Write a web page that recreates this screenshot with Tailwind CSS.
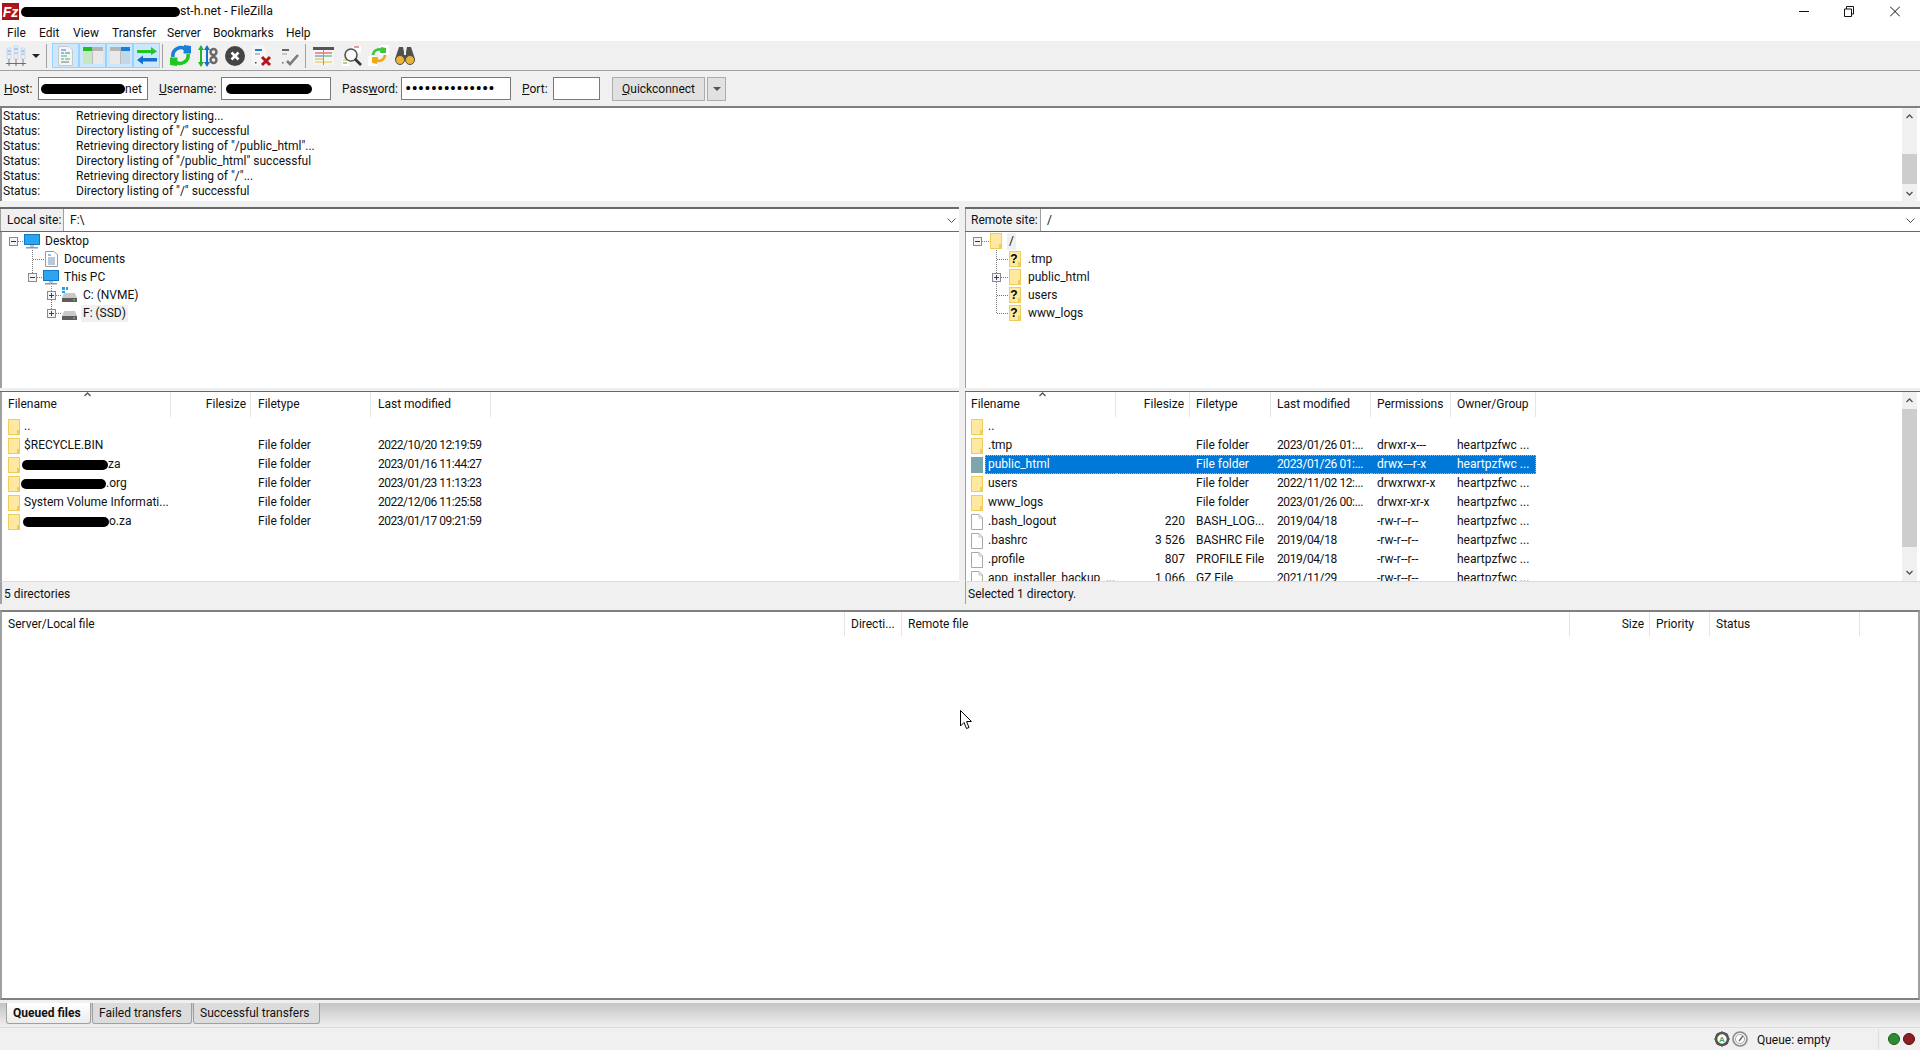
<!DOCTYPE html>
<html lang="en">
<head>
  <meta charset="UTF-8">
  <title>FileZilla</title>
  <script src="https://cdn.jsdelivr.net/npm/@tailwindcss/browser@4"></script>
</head>
<body class="h-[1050px] w-[1920px] overflow-hidden whitespace-nowrap bg-[#f0f0f0] text-[12px] text-[#111] [font-family:Roboto,sans-serif]">

  <!-- shared icons -->
  <svg class="hidden">
    <symbol id="folder" viewBox="0 0 12 16">
      <rect x="0.5" y="0.5" width="11" height="15" fill="#ffe9a0" stroke="#f0cd5a"/>
      <rect x="9" y="11" width="3" height="5" fill="#f0cd5a"/>
    </symbol>
    <symbol id="qfolder" viewBox="0 0 12 16">
      <rect x="0.5" y="0.5" width="11" height="15" fill="#ffe9a0" stroke="#f0cd5a"/>
      <rect x="9" y="11" width="3" height="5" fill="#f0cd5a"/>
      <text x="5" y="12" font-size="12" font-weight="700" text-anchor="middle" fill="#000" font-family="Liberation Sans">?</text>
    </symbol>
    <symbol id="file" viewBox="0 0 12 16">
      <path d="M.5.5H8L11.500 4V15.500H.5Z" fill="#fff" stroke="#a8a8a8"/>
      <path d="M8 .5V4H11.500" fill="none" stroke="#c4c4c4"/>
    </symbol>
    <symbol id="minus" viewBox="0 0 9 9">
      <rect x="0.5" y="0.5" width="8" height="8" fill="#f4f4f4" stroke="#8a8a8a"/>
      <path d="M2 4.500H7" stroke="#333"/>
    </symbol>
    <symbol id="plus" viewBox="0 0 9 9">
      <rect x="0.5" y="0.5" width="8" height="8" fill="#f4f4f4" stroke="#8a8a8a"/>
      <path d="M2 4.500H7M4.500 2V7" stroke="#2c3e78"/>
    </symbol>
    <symbol id="drive" viewBox="0 0 15 10">
      <path d="M2 1H13L15 6V10H0V6Z" fill="#c9c9c9"/>
      <rect y="6" width="15" height="4" fill="#5d5d5d"/>
      <rect x="11" y="7.500" width="2" height="1" fill="#7ddc6a"/>
    </symbol>
    <symbol id="monitor" viewBox="0 0 16 15">
      <rect x="0.500" y="0.500" width="15" height="10" fill="#2aa5f0" stroke="#1277c4"/>
      <rect x="6" y="11" width="4" height="2" fill="#b9c4cc"/>
      <rect x="2" y="13" width="12" height="1.500" fill="#8e9aa3"/>
    </symbol>
    <symbol id="updown" viewBox="0 0 7 5">
      <path d="M.5 4L3.500 1L6.500 4" fill="none" stroke="#555" stroke-width="1.400"/>
    </symbol>
  </svg>

  <!-- title bar -->
  <div class="flex h-[23px] items-center bg-white pl-[2px]">
    <svg class="h-[17px] w-[17px] shrink-0" viewBox="0 0 17 17">
      <rect width="17" height="17" fill="#b3161b"/>
      <rect x="1" y="1" width="15" height="15" fill="none" stroke="#7d0c10" stroke-width="0.500"/>
      <text x="8.500" y="14" font-size="14" font-weight="700" font-style="italic" text-anchor="middle" fill="#fff" font-family="Liberation Sans">Fz</text>
    </svg>
    <span class="ml-[2px] h-[10px] w-[159px] rounded-full bg-black"></span>
    <span class="text-[12.300px]">st-h.net - FileZilla</span>
    <div class="ml-auto flex items-center">
      <svg class="mr-[35px] h-[11px] w-[10px]" viewBox="0 0 10 11"><path d="M0 5.500H10" stroke="#111"/></svg>
      <svg class="mr-[36px] h-[11px] w-[10px]" viewBox="0 0 10 11"><path d="M.5 3H7.500V10.500H.5ZM2.500 3V.5H9.500V8H7.500" fill="none" stroke="#111"/></svg>
      <svg class="mr-[20px] h-[11px] w-[10px]" viewBox="0 0 10 11"><path d="M0 .5L10 10.500M10 .5L0 10.500" stroke="#111"/></svg>
    </div>
  </div>

  <!-- menu -->
  <div class="flex h-[18px] items-center bg-white pt-[2px] pl-[7px] leading-[16px]">
    <span class="w-[32px]">File</span>
    <span class="w-[34px]">Edit</span>
    <span class="w-[39px]">View</span>
    <span class="w-[55px]">Transfer</span>
    <span class="w-[46px]">Server</span>
    <span class="w-[73px]">Bookmarks</span>
    <span>Help</span>
  </div>

  <!-- toolbar -->
  <div class="flex h-[30px] items-center border-b border-[#a0a0a0] bg-[#f0f0f0]">
    <svg class="ml-[6px] h-[22px] w-[20px]" viewBox="0 0 20 22">
      <rect x="1" y="3" width="4" height="11" fill="#e8eef6" stroke="#b9c4d6" stroke-width="0.500"/>
      <rect x="8" y="1" width="4" height="13" fill="#e8eef6" stroke="#b9c4d6" stroke-width="0.500"/>
      <rect x="15" y="3" width="4" height="11" fill="#e8eef6" stroke="#b9c4d6" stroke-width="0.500"/>
      <path d="M1.500 6H4.500M8.500 4H11.500M15.500 6H18.500" stroke="#4da3e8"/>
      <path d="M1.500 9H4.500M8.500 8H11.500M15.500 9H18.500" stroke="#7bbcf0"/>
      <path d="M3 14V18M10 14V18M17 14V18" stroke="#7f7f7f"/>
      <path d="M0 18.500H20" stroke="#6d6d6d"/>
      <path d="M3 19V21M10 19V21M17 19V21" stroke="#6d6d6d"/>
    </svg>
    <svg class="ml-[6px] h-[4px] w-[8px]" viewBox="0 0 8 4"><path d="M0 0H8L4 4Z" fill="#222"/></svg>
    <div class="ml-[6px] h-[24px] w-px bg-[#a0a0a0]"></div>
    <div class="ml-[5px] flex h-[25px]">
      <div class="flex w-[27px] items-center justify-center border border-[#99d1ff] bg-[#cce8ff]">
        <svg class="h-[20px] w-[15px]" viewBox="0 0 15 20">
          <path d="M.5.5H11L14.500 4V19.500H.5Z" fill="#f5f5f5" stroke="#c8c8c8"/>
          <path d="M3 4H8M3 7H6M7 7H12" stroke="#3f7ec4"/>
          <path d="M3 10H9M3 13H6M7 13H12" stroke="#45b85c"/>
          <path d="M3 16H11" stroke="#777"/>
        </svg>
      </div>
      <div class="flex w-[27px] items-center justify-center border border-[#99d1ff] bg-[#cce8ff]">
        <svg class="h-[17px] w-[20px]" viewBox="0 0 20 17">
          <rect width="20" height="17" fill="#e9e9e9"/>
          <rect width="9" height="4" fill="#1fc21f"/>
          <rect x="9" width="11" height="4" fill="#b4b4b4"/>
          <rect y="4" width="9" height="13" fill="#c9e6c3"/>
          <path d="M9.500 4V17" stroke="#bdbdbd"/>
        </svg>
      </div>
      <div class="flex w-[27px] items-center justify-center border border-[#99d1ff] bg-[#cce8ff]">
        <svg class="h-[17px] w-[20px]" viewBox="0 0 20 17">
          <rect width="20" height="17" fill="#e9e9e9"/>
          <rect width="11" height="4" fill="#b4b4b4"/>
          <rect x="11" width="9" height="4" fill="#1a7fd6"/>
          <rect x="11" y="4" width="9" height="13" fill="#c2d6e6"/>
          <path d="M10.500 4V17" stroke="#bdbdbd"/>
        </svg>
      </div>
      <div class="flex w-[27px] items-center justify-center border border-[#99d1ff] bg-[#cce8ff]">
        <svg class="h-[20px] w-[20px]" viewBox="0 0 20 20">
          <path d="M0 4H14V1L20 5.500L14 9V7H0Z" fill="#1ec81e"/>
          <path d="M20 12H6V9.500L0 14L6 18.500V15.500H20Z" fill="#1670c8"/>
        </svg>
      </div>
    </div>
    <div class="ml-[2px] h-[24px] w-px bg-[#a0a0a0]"></div>
    <svg class="ml-[7px] h-[21px] w-[21px]" viewBox="0 0 21 21">
      <path d="M3 12A8 8 0 0 1 16 4.500" fill="none" stroke="#1a7fd6" stroke-width="3.600"/>
      <path d="M14 0L21 1V8.500H13.500Z" fill="#1a7fd6"/>
      <path d="M18 9A8 8 0 0 1 5 16.500" fill="none" stroke="#1ec81e" stroke-width="3.600"/>
      <path d="M7 21L0 20V12.500H7.500Z" fill="#1ec81e"/>
    </svg>
    <svg class="ml-[7px] h-[22px] w-[20px]" viewBox="0 0 20 22">
      <path d="M3 0L6 5H4V17H6L3 22L0 17H2V5H0Z" fill="#22b42a"/>
      <path d="M9 0L12 5H10V17H12L9 22L6 17H8V5H6Z" fill="#1670c8"/>
      <circle cx="15.500" cy="7" r="3" fill="none" stroke="#6a6a6a" stroke-width="2.400"/>
      <circle cx="15.500" cy="15" r="3" fill="none" stroke="#6a6a6a" stroke-width="2.400"/>
    </svg>
    <svg class="ml-[7px] h-[20px] w-[20px]" viewBox="0 0 20 20">
      <circle cx="10" cy="10" r="10" fill="#444"/>
      <path d="M6.500 6.500L13.500 13.500M13.500 6.500L6.500 13.500" stroke="#fff" stroke-width="2.600"/>
    </svg>
    <svg class="ml-[7px] h-[22px] w-[20px]" viewBox="0 0 20 22">
      <path d="M0 0H10L14 4V21H0Z" fill="#f6f6f6"/>
      <path d="M3 5H10" stroke="#1a7fd6" stroke-width="2"/>
      <path d="M3 9H8" stroke="#8a8a8a"/>
      <rect x="3" y="17" width="1.500" height="1.500" fill="#444"/>
      <path d="M10 12L18 20M18 12L10 20" stroke="#b3161b" stroke-width="3"/>
    </svg>
    <svg class="ml-[7px] h-[22px] w-[20px]" viewBox="0 0 20 22">
      <path d="M0 0H10L14 4V21H0Z" fill="#f0f0f0"/>
      <path d="M3 5H10" stroke="#666" stroke-width="2"/>
      <path d="M3 9H8" stroke="#a0a0a0"/>
      <rect x="3" y="17" width="1.500" height="1.500" fill="#666"/>
      <path d="M8 16L11 19L19 10" fill="none" stroke="#7c7c7c" stroke-width="2.600"/>
    </svg>
    <div class="ml-[6px] h-[24px] w-px bg-[#a0a0a0]"></div>
    <svg class="ml-[7px] h-[18px] w-[21px]" viewBox="0 0 21 18">
      <rect width="21" height="18" fill="#f6f6f6"/>
      <rect width="21" height="3" fill="#555"/>
      <path d="M2 6H19" stroke="#d93636"/>
      <path d="M2 9H10" stroke="#2a7fd6"/>
      <path d="M11 9H19" stroke="#28b44a"/>
      <path d="M2 12H10" stroke="#e8a820"/>
      <path d="M2 15H19" stroke="#e8c820"/>
      <path d="M10.500 3V18" stroke="#999"/>
    </svg>
    <svg class="ml-[8px] h-[22px] w-[20px]" viewBox="0 0 20 22">
      <rect x="10" y="1" width="9" height="7" fill="#fff"/>
      <path d="M12 2H17" stroke="#d93636"/>
      <rect x="0" y="13" width="7" height="8" fill="#fff"/>
      <path d="M1 15H5" stroke="#e8a820"/>
      <path d="M1 18H5" stroke="#28b44a"/>
      <circle cx="9" cy="10" r="6" fill="#fff" fill-opacity="0.600" stroke="#555" stroke-width="1.600"/>
      <path d="M13 14L19 20" stroke="#333" stroke-width="2.600"/>
    </svg>
    <svg class="ml-[6px] h-[21px] w-[22px]" viewBox="0 0 22 21">
      <rect x="12" y="0" width="9" height="10" fill="#fff"/>
      <rect x="0" y="11" width="9" height="10" fill="#fff"/>
      <path d="M5 10A6 6 0 0 1 15 6" fill="none" stroke="#3cc43c" stroke-width="2.600"/>
      <path d="M13 2L18 3V8H12Z" fill="#3cc43c"/>
      <path d="M17 10A6 6 0 0 1 8 15" fill="none" stroke="#f0a818" stroke-width="2.600"/>
      <path d="M9 19L4 18V12H10Z" fill="#f0a818"/>
    </svg>
    <svg class="ml-[5px] h-[19px] w-[20px]" viewBox="0 0 20 19">
      <path d="M4 1H8L9 6V9H11V6L12 1H16L20 13H0Z" fill="#50504c"/>
      <circle cx="5" cy="14" r="4.500" fill="#e8b43c" stroke="#50504c"/>
      <circle cx="15" cy="14" r="4.500" fill="#e8b43c" stroke="#50504c"/>
    </svg>
  </div>

  <!-- quickconnect bar -->
  <div class="flex h-[35px] items-center pl-[4px]">
    <span class="w-[34px]"><u>H</u>ost:</span>
    <div class="flex h-[23px] w-[110px] items-center border border-[#7a7a7a] bg-white pl-[2px]">
      <span class="h-[10px] w-[84px] rounded-full bg-black"></span><span>net</span>
    </div>
    <span class="ml-[11px] w-[62px]"><u>U</u>sername:</span>
    <div class="flex h-[23px] w-[110px] items-center border border-[#7a7a7a] bg-white pl-[4px]">
      <span class="h-[10px] w-[86px] rounded-full bg-black"></span>
    </div>
    <span class="ml-[11px] w-[59px]">Pass<u>w</u>ord:</span>
    <div class="flex h-[23px] w-[110px] items-center overflow-hidden border border-[#7a7a7a] bg-white pl-[3px] text-[19px] leading-none text-black">••••••••••••••</div>
    <span class="ml-[11px] w-[31px]"><u>P</u>ort:</span>
    <div class="h-[23px] w-[47px] border border-[#7a7a7a] bg-white"></div>
    <div class="ml-[12px] flex h-[24px] w-[93px] items-center justify-center border border-[#adadad] bg-[#e1e1e1]"><span><u>Q</u>uickconnect</span></div>
    <div class="ml-[2px] flex h-[24px] w-[19px] items-center justify-center border border-[#adadad] bg-[#e1e1e1]">
      <svg class="h-[4px] w-[8px]" viewBox="0 0 8 4"><path d="M0 0H8L4 4Z" fill="#555"/></svg>
    </div>
  </div>

  <!-- message log -->
  <div class="flex h-[95px] border-t-2 border-l-2 border-[#808080] bg-white">
    <div class="flex-1 pt-px pl-[1px] leading-[15px]">
      <div class="flex"><span class="w-[73px]">Status:</span><span>Retrieving directory listing...</span></div>
      <div class="flex"><span class="w-[73px]">Status:</span><span>Directory listing of "/" successful</span></div>
      <div class="flex"><span class="w-[73px]">Status:</span><span>Retrieving directory listing of "/public_html"...</span></div>
      <div class="flex"><span class="w-[73px]">Status:</span><span>Directory listing of "/public_html" successful</span></div>
      <div class="flex"><span class="w-[73px]">Status:</span><span>Retrieving directory listing of "/"...</span></div>
      <div class="flex"><span class="w-[73px]">Status:</span><span>Directory listing of "/" successful</span></div>
    </div>
    <div class="flex w-[15px] flex-col items-center bg-[#f0f0f0]">
      <svg class="mt-[6px] h-[5px] w-[7px]" viewBox="0 0 7 5"><use href="#updown"/></svg>
      <div class="mt-[35px] h-[30px] w-full bg-[#cdcdcd]"></div>
      <svg class="mt-[7px] h-[5px] w-[7px] rotate-180" viewBox="0 0 7 5"><use href="#updown"/></svg>
    </div>
    <div class="w-[3px]"></div>
  </div>

  <div class="h-[6px]"></div>

  <!-- local and remote panes -->
  <div class="flex">

    <!-- local -->
    <div class="w-[959px] shrink-0">
      <div class="border-t-2 border-[#696969]"></div>
      <div class="flex h-[23px] items-center border-b border-[#696969] bg-white">
        <div class="flex h-full w-[64px] items-center border-x border-[#a0a0a0] bg-[#f0f0f0] pl-[6px]">Local site:</div>
        <span class="ml-[6px] flex-1">F:\</span>
        <svg class="mr-[3px] h-[5px] w-[9px]" viewBox="0 0 9 5"><path d="M.5.5L4.500 4.500L8.500 .5" fill="none" stroke="#555"/></svg>
      </div>
      <div class="h-[156px] border-l-2 border-[#a0a0a0] bg-white">
        <div class="flex h-[18px] items-center">
          <svg class="h-[18px] w-[43px] shrink-0" viewBox="0 0 43 18">
            <use href="#minus" x="7" y="5" width="9" height="9"/>
            <path d="M16 9.500H22" stroke="#777" stroke-dasharray="1 1"/>
            <use href="#monitor" x="22" y="2" width="16" height="15"/>
          </svg><span>Desktop</span>
        </div>
        <div class="flex h-[18px] items-center">
          <svg class="h-[18px] w-[62px] shrink-0" viewBox="0 0 62 18">
            <path d="M30.500 0V18M31 9.500H43" stroke="#777" stroke-dasharray="1 1"/>
            <path d="M43.500 1.500H52L55.500 5V16.500H43.500Z" fill="#fff" stroke="#9a9a9a"/>
            <path d="M46 5H49" stroke="#2a7fd6"/><path d="M46 8H53M46 10H53M46 12H53M46 14H53" stroke="#6f94b8"/>
          </svg><span>Documents</span>
        </div>
        <div class="flex h-[18px] items-center">
          <svg class="h-[18px] w-[62px] shrink-0" viewBox="0 0 62 18">
            <path d="M30.500 0V5M35 9.500H41" stroke="#777" stroke-dasharray="1 1"/>
            <use href="#minus" x="26" y="5" width="9" height="9"/>
            <use href="#monitor" x="41" y="2" width="16" height="15"/>
          </svg><span>This PC</span>
        </div>
        <div class="flex h-[18px] items-center">
          <svg class="h-[18px] w-[81px] shrink-0" viewBox="0 0 81 18">
            <path d="M49.500 0V18M54 9.500H60" stroke="#777" stroke-dasharray="1 1"/>
            <use href="#plus" x="45" y="5" width="9" height="9"/>
            <use href="#drive" x="60" y="6" width="15" height="10"/>
            <rect x="60" y="1" width="3" height="3" fill="#1ea0f0"/><rect x="64" y="1" width="2" height="3" fill="#1ea0f0"/><rect x="60" y="5" width="3" height="2" fill="#1ea0f0"/>
          </svg><span>C: (NVME)</span>
        </div>
        <div class="flex h-[18px] items-center">
          <svg class="h-[18px] w-[79px] shrink-0" viewBox="0 0 79 18">
            <path d="M49.500 0V5M54 9.500H60" stroke="#777" stroke-dasharray="1 1"/>
            <use href="#plus" x="45" y="5" width="9" height="9"/>
            <use href="#drive" x="60" y="6" width="15" height="10"/>
          </svg><span class="bg-[#f0f0f0] px-[2px] leading-[17px]">F: (SSD)</span>
        </div>
      </div>
      <div class="h-[3px]"></div>
      <div class="border-t border-[#696969]"></div>
      <div class="h-[189px] border-l-2 border-[#a0a0a0] bg-white">
        <div class="grid h-[25px] grid-cols-[169px_80px_120px_120px] leading-[24px]">
          <div class="relative border-r border-[#e5e5e5] pl-[6px]">Filename
            <svg class="absolute top-[0px] left-[82px] h-[5px] w-[7px]" viewBox="0 0 7 5"><use href="#updown"/></svg>
          </div>
          <div class="border-r border-[#e5e5e5] pr-[4px] text-right">Filesize</div>
          <div class="border-r border-[#e5e5e5] pl-[7px]">Filetype</div>
          <div class="border-r border-[#e5e5e5] pl-[7px]">Last modified</div>
        </div>
        <div class="grid h-[19px] grid-cols-[169px_80px_120px_120px] leading-[19px]">
          <div class="flex items-center pl-[6px]"><svg class="h-[16px] w-[12px]"><use href="#folder"/></svg><span class="ml-[4px]">..</span></div>
          <div></div><div></div><div></div>
        </div>
        <div class="grid h-[19px] grid-cols-[169px_80px_120px_120px] leading-[19px]">
          <div class="flex items-center pl-[6px]"><svg class="h-[16px] w-[12px]"><use href="#folder"/></svg><span class="ml-[4px]">$RECYCLE.BIN</span></div>
          <div></div><div class="pl-[7px]">File folder</div><div class="pl-[7px] tracking-[-0.5px]">2022/10/20 12:19:59</div>
        </div>
        <div class="grid h-[19px] grid-cols-[169px_80px_120px_120px] leading-[19px]">
          <div class="flex items-center pl-[6px]"><svg class="h-[16px] w-[12px]"><use href="#folder"/></svg><span class="ml-[2px] h-[10px] w-[86px] rounded-full bg-black"></span><span>za</span></div>
          <div></div><div class="pl-[7px]">File folder</div><div class="pl-[7px] tracking-[-0.5px]">2023/01/16 11:44:27</div>
        </div>
        <div class="grid h-[19px] grid-cols-[169px_80px_120px_120px] leading-[19px]">
          <div class="flex items-center pl-[6px]"><svg class="h-[16px] w-[12px]"><use href="#folder"/></svg><span class="ml-[1px] h-[10px] w-[85px] rounded-full bg-black"></span><span>.org</span></div>
          <div></div><div class="pl-[7px]">File folder</div><div class="pl-[7px] tracking-[-0.5px]">2023/01/23 11:13:23</div>
        </div>
        <div class="grid h-[19px] grid-cols-[169px_80px_120px_120px] leading-[19px]">
          <div class="flex items-center pl-[6px]"><svg class="h-[16px] w-[12px]"><use href="#folder"/></svg><span class="ml-[4px]">System Volume Informati...</span></div>
          <div></div><div class="pl-[7px]">File folder</div><div class="pl-[7px] tracking-[-0.5px]">2022/12/06 11:25:58</div>
        </div>
        <div class="grid h-[19px] grid-cols-[169px_80px_120px_120px] leading-[19px]">
          <div class="flex items-center pl-[6px]"><svg class="h-[16px] w-[12px]"><use href="#folder"/></svg><span class="ml-[3px] h-[10px] w-[86px] rounded-full bg-black"></span><span>o.za</span></div>
          <div></div><div class="pl-[7px]">File folder</div><div class="pl-[7px] tracking-[-0.5px]">2023/01/17 09:21:59</div>
        </div>
      </div>
      <div class="flex h-[23px] items-center border-t border-l-2 border-t-[#dcdcdc] border-l-[#a0a0a0] pt-px pl-[2px]">5 directories</div>
    </div>

    <div class="w-[6px] shrink-0"></div>

    <!-- remote -->
    <div class="w-[955px] shrink-0">
      <div class="border-t-2 border-[#696969]"></div>
      <div class="flex h-[23px] items-center border-b border-[#696969] bg-white">
        <div class="flex h-full w-[76px] items-center border-x border-[#a0a0a0] bg-[#f0f0f0] pl-[5px]">Remote site:</div>
        <span class="ml-[6px] flex-1">/</span>
        <svg class="mr-[5px] h-[5px] w-[9px]" viewBox="0 0 9 5"><path d="M.5.5L4.500 4.500L8.500 .5" fill="none" stroke="#555"/></svg>
      </div>
      <div class="h-[156px] border-l border-[#a0a0a0] bg-white">
        <div class="flex h-[18px] items-center">
          <svg class="h-[18px] w-[41px] shrink-0" viewBox="0 0 41 18">
            <use href="#minus" x="7" y="5" width="9" height="9"/>
            <path d="M16 9.500H24" stroke="#777" stroke-dasharray="1 1"/>
            <use href="#folder" x="24" y="1" width="12" height="16"/>
          </svg><span class="bg-[#f0f0f0] px-[2px] leading-[17px]">/</span>
        </div>
        <div class="flex h-[18px] items-center">
          <svg class="h-[18px] w-[62px] shrink-0" viewBox="0 0 62 18">
            <path d="M30.500 0V18M31 9.500H43" stroke="#777" stroke-dasharray="1 1"/>
            <use href="#qfolder" x="43" y="1" width="12" height="16"/>
          </svg><span>.tmp</span>
        </div>
        <div class="flex h-[18px] items-center">
          <svg class="h-[18px] w-[62px] shrink-0" viewBox="0 0 62 18">
            <path d="M30.500 0V18M35 9.500H43" stroke="#777" stroke-dasharray="1 1"/>
            <use href="#plus" x="26" y="5" width="9" height="9"/>
            <use href="#folder" x="43" y="1" width="12" height="16"/>
          </svg><span>public_html</span>
        </div>
        <div class="flex h-[18px] items-center">
          <svg class="h-[18px] w-[62px] shrink-0" viewBox="0 0 62 18">
            <path d="M30.500 0V18M31 9.500H43" stroke="#777" stroke-dasharray="1 1"/>
            <use href="#qfolder" x="43" y="1" width="12" height="16"/>
          </svg><span>users</span>
        </div>
        <div class="flex h-[18px] items-center">
          <svg class="h-[18px] w-[62px] shrink-0" viewBox="0 0 62 18">
            <path d="M30.500 0V9M31 9.500H43" stroke="#777" stroke-dasharray="1 1"/>
            <use href="#qfolder" x="43" y="1" width="12" height="16"/>
          </svg><span>www_logs</span>
        </div>
      </div>
      <div class="h-[3px]"></div>
      <div class="border-t border-[#696969]"></div>
      <div class="flex h-[189px] border-l border-[#a0a0a0] bg-white">
        <div class="min-w-0 flex-1">
          <div class="grid h-[25px] grid-cols-[150px_74px_81px_100px_80px_85px] leading-[24px]">
            <div class="relative border-r border-[#e5e5e5] pl-[5px]">Filename
              <svg class="absolute top-[0px] left-[73px] h-[5px] w-[7px]" viewBox="0 0 7 5"><use href="#updown"/></svg>
            </div>
            <div class="border-r border-[#e5e5e5] pr-[5px] text-right">Filesize</div>
            <div class="border-r border-[#e5e5e5] pl-[6px]">Filetype</div>
            <div class="border-r border-[#e5e5e5] pl-[6px]">Last modified</div>
            <div class="border-r border-[#e5e5e5] pl-[6px]">Permissions</div>
            <div class="border-r border-[#e5e5e5] pl-[6px]">Owner/Group</div>
          </div>
          <div class="h-[164px] overflow-hidden">
            <div class="grid h-[19px] grid-cols-[150px_74px_81px_100px_80px_85px] leading-[19px]">
              <div class="flex items-center pl-[5px]"><svg class="h-[16px] w-[12px]"><use href="#folder"/></svg><span class="ml-[5px]">..</span></div>
              <div></div><div></div><div></div><div></div><div></div>
            </div>
            <div class="grid h-[19px] grid-cols-[150px_74px_81px_100px_80px_85px] leading-[19px]">
              <div class="flex items-center pl-[5px]"><svg class="h-[16px] w-[12px]"><use href="#folder"/></svg><span class="ml-[5px]">.tmp</span></div>
              <div></div><div class="pl-[6px]">File folder</div><div class="pl-[6px] tracking-[-0.4px]">2023/01/26 01:...</div><div class="pl-[6px]">drwxr-x---</div><div class="pl-[6px]">heartpzfwc ...</div>
            </div>
            <div class="grid h-[19px] grid-cols-[150px_74px_81px_100px_80px_85px] leading-[17px] text-white">
              <div class="flex items-center pl-[5px]"><svg class="h-[16px] w-[12px] shrink-0" viewBox="0 0 12 16"><rect width="12" height="16" fill="#7ba7ac"/></svg><span class="ml-[2px] h-full flex-1 border-y border-l border-dotted border-[#8cc0ee] bg-[#0078d7] pl-[2px]">public_html</span></div>
              <div class="border-y border-dotted border-[#8cc0ee] bg-[#0078d7]"></div>
              <div class="border-y border-dotted border-[#8cc0ee] bg-[#0078d7] pl-[6px]">File folder</div>
              <div class="border-y border-dotted border-[#8cc0ee] bg-[#0078d7] pl-[6px] tracking-[-0.4px]">2023/01/26 01:...</div>
              <div class="border-y border-dotted border-[#8cc0ee] bg-[#0078d7] pl-[6px]">drwx---r-x</div>
              <div class="border-y border-r border-dotted border-[#8cc0ee] bg-[#0078d7] pl-[6px]">heartpzfwc ...</div>
            </div>
            <div class="grid h-[19px] grid-cols-[150px_74px_81px_100px_80px_85px] leading-[19px]">
              <div class="flex items-center pl-[5px]"><svg class="h-[16px] w-[12px]"><use href="#folder"/></svg><span class="ml-[5px]">users</span></div>
              <div></div><div class="pl-[6px]">File folder</div><div class="pl-[6px] tracking-[-0.4px]">2022/11/02 12:...</div><div class="pl-[6px]">drwxrwxr-x</div><div class="pl-[6px]">heartpzfwc ...</div>
            </div>
            <div class="grid h-[19px] grid-cols-[150px_74px_81px_100px_80px_85px] leading-[19px]">
              <div class="flex items-center pl-[5px]"><svg class="h-[16px] w-[12px]"><use href="#folder"/></svg><span class="ml-[5px]">www_logs</span></div>
              <div></div><div class="pl-[6px]">File folder</div><div class="pl-[6px] tracking-[-0.4px]">2023/01/26 00:...</div><div class="pl-[6px]">drwxr-xr-x</div><div class="pl-[6px]">heartpzfwc ...</div>
            </div>
            <div class="grid h-[19px] grid-cols-[150px_74px_81px_100px_80px_85px] leading-[19px]">
              <div class="flex items-center pl-[5px]"><svg class="h-[16px] w-[12px]"><use href="#file"/></svg><span class="ml-[5px]">.bash_logout</span></div>
              <div class="pr-[5px] text-right">220</div><div class="pl-[6px]">BASH_LOG...</div><div class="pl-[6px] tracking-[-0.4px]">2019/04/18</div><div class="pl-[6px]">-rw-r--r--</div><div class="pl-[6px]">heartpzfwc ...</div>
            </div>
            <div class="grid h-[19px] grid-cols-[150px_74px_81px_100px_80px_85px] leading-[19px]">
              <div class="flex items-center pl-[5px]"><svg class="h-[16px] w-[12px]"><use href="#file"/></svg><span class="ml-[5px]">.bashrc</span></div>
              <div class="pr-[5px] text-right">3 526</div><div class="pl-[6px]">BASHRC File</div><div class="pl-[6px] tracking-[-0.4px]">2019/04/18</div><div class="pl-[6px]">-rw-r--r--</div><div class="pl-[6px]">heartpzfwc ...</div>
            </div>
            <div class="grid h-[19px] grid-cols-[150px_74px_81px_100px_80px_85px] leading-[19px]">
              <div class="flex items-center pl-[5px]"><svg class="h-[16px] w-[12px]"><use href="#file"/></svg><span class="ml-[5px]">.profile</span></div>
              <div class="pr-[5px] text-right">807</div><div class="pl-[6px]">PROFILE File</div><div class="pl-[6px] tracking-[-0.4px]">2019/04/18</div><div class="pl-[6px]">-rw-r--r--</div><div class="pl-[6px]">heartpzfwc ...</div>
            </div>
            <div class="grid h-[19px] grid-cols-[150px_74px_81px_100px_80px_85px] leading-[19px]">
              <div class="flex items-center pl-[5px]"><svg class="h-[16px] w-[12px]"><use href="#file"/></svg><span class="ml-[5px]">app_installer_backup_...</span></div>
              <div class="pr-[5px] text-right">1 066</div><div class="pl-[6px]">GZ File</div><div class="pl-[6px] tracking-[-0.4px]">2021/11/29</div><div class="pl-[6px]">-rw-r--r--</div><div class="pl-[6px]">heartpzfwc ...</div>
            </div>
          </div>
        </div>
        <div class="flex w-[15px] flex-col items-center bg-[#f0f0f0]">
          <svg class="mt-[6px] h-[5px] w-[7px]" viewBox="0 0 7 5"><use href="#updown"/></svg>
          <div class="mt-[6px] h-[138px] w-full bg-[#cdcdcd]"></div>
          <svg class="mt-[23px] h-[5px] w-[7px] rotate-180" viewBox="0 0 7 5"><use href="#updown"/></svg>
        </div>
        <div class="w-[3px]"></div>
      </div>
      <div class="flex h-[23px] items-center border-t border-l border-t-[#dcdcdc] border-l-[#a0a0a0] pt-px pl-[2px]">Selected 1 directory.</div>
    </div>
  </div>

  <div class="h-[6px]"></div>

  <!-- transfer queue -->
  <div class="h-[390px] border-2 border-[#808080] border-x-[#a0a0a0] bg-white">
    <div class="grid h-[24px] grid-cols-[843px_57px_668px_80px_60px_150px] leading-[24px]">
      <div class="border-r border-[#e5e5e5] pl-[6px]">Server/Local file</div>
      <div class="border-r border-[#e5e5e5] pl-[6px]">Directi...</div>
      <div class="border-r border-[#e5e5e5] pl-[6px]">Remote file</div>
      <div class="border-r border-[#e5e5e5] pr-[5px] text-right">Size</div>
      <div class="border-r border-[#e5e5e5] pl-[6px]">Priority</div>
      <div class="border-r border-[#e5e5e5] pl-[6px]">Status</div>
    </div>
    <!-- mouse cursor caught in the screenshot -->
    <svg class="mt-[74px] ml-[958px] h-[20px] w-[13px]" viewBox="0 0 13 20">
      <path d="M.5.5V16L4 12.500L6.500 18.500L9 17.500L6.500 11.500H11.500Z" fill="#fff" stroke="#000"/>
    </svg>
  </div>

  <div class="h-[3px]"></div>

  <!-- queue tabs -->
  <div class="flex h-[25px] border-b border-[#dcdcdc] bg-gradient-to-b from-[#c4c4c4] to-[#f0f0f0] pl-[6px]">
    <div class="flex h-[21px] w-[85px] items-center rounded-b-[3px] border border-t-0 border-[#a0a0a0] bg-gradient-to-b from-[#ffffff] to-[#ececec] pl-[6px] font-bold">Queued files</div>
    <div class="ml-px flex h-[21px] w-[100px] items-center rounded-b-[3px] border border-t-0 border-[#a0a0a0] bg-[#dcdcdc] pl-[6px]">Failed transfers</div>
    <div class="ml-px flex h-[21px] w-[127px] items-center rounded-b-[3px] border border-t-0 border-[#a0a0a0] bg-[#dcdcdc] pl-[6px]">Successful transfers</div>
  </div>

  <!-- status bar -->
  <div class="flex h-[22px] items-center justify-end">
    <svg class="h-[16px] w-[16px]" viewBox="0 0 16 16">
      <circle cx="8" cy="8" r="6" fill="#fff" stroke="#555" stroke-width="2.600"/>
      <path d="M8 .5V3M8 13V15.500M.5 8H3M13 8H15.500M2.700 2.700L4.500 4.500M11.500 11.500L13.300 13.300M13.300 2.700L11.500 4.500M4.500 11.500L2.700 13.300" stroke="#555" stroke-width="2"/>
      <text x="8" y="11" font-size="8" font-weight="700" text-anchor="middle" fill="#2fb24a" font-family="Liberation Sans">A</text>
    </svg>
    <svg class="ml-[2px] h-[16px] w-[16px]" viewBox="0 0 16 16">
      <circle cx="8" cy="8" r="7" fill="#eee" stroke="#8a8a8a" stroke-width="1.600"/>
      <circle cx="8" cy="8" r="4.500" fill="#fff" stroke="#aaa"/>
      <path d="M7 10L11 5" stroke="#666" stroke-width="1.400"/>
    </svg>
    <span class="ml-[9px] w-[121px] pt-px">Queue: empty</span>
    <div class="h-[20px] w-px bg-[#dcdcdc]"></div>
    <div class="ml-[9px] h-[12px] w-[12px] rounded-full border border-[#1f5a1f] bg-[#2e8b2e]"></div>
    <div class="ml-[3px] h-[12px] w-[12px] rounded-full border border-[#5a1010] bg-[#8b1f24]"></div>
    <div class="w-[5px]"></div>
  </div>

</body>
</html>
